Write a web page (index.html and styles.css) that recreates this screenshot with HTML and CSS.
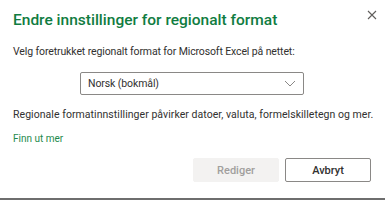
FILE: index.html
```html
<!DOCTYPE html>
<html lang="nb">
<head>
    <meta charset="UTF-8">
    <title>Endre innstillinger for regionalt format</title>
    <link rel="stylesheet" href="styles.css">
</head>
<body>
    <div class="dialog">
        <div class="dialog-header">
            <h1 class="dialog-title">Endre innstillinger for regionalt format</h1>
            <button class="close-btn" aria-label="Lukk">
                <svg width="10" height="10" viewBox="0 0 10 10">
                    <path d="M1 1 L9 9 M9 1 L1 9" stroke="#605e5c" stroke-width="1.1" fill="none"/>
                </svg>
            </button>
        </div>
        <p class="intro">Velg foretrukket regionalt format for Microsoft Excel på nettet:</p>
        <div class="select-row">
            <div class="select">
                <span>Norsk (bokmål)</span>
                <svg width="12" height="7" viewBox="0 0 12 7">
                    <path d="M1 1 L6 6 L11 1" stroke="#8a8886" stroke-width="1" fill="none"/>
                </svg>
            </div>
        </div>
        <p class="info">Regionale formatinnstillinger påvirker datoer, valuta, formelskilletegn og mer.</p>
        <a class="learn-more" href="#">Finn ut mer</a>
        <div class="actions">
            <button class="btn btn-disabled">Rediger</button>
            <button class="btn btn-secondary">Avbryt</button>
        </div>
    </div>
</body>
</html>
```

FILE: styles.css
```css
body {
    margin: 0;
    background-color: #fff;
    font-family: Roboto, "Noto Sans", sans-serif;
    color: #323130;
}

.dialog {
    height: 200px;
    box-sizing: border-box;
    padding: 8px 14px 0 13px;
    border-bottom: 2px solid #6e6e6e;
}

.dialog-header {
    display: flex;
    justify-content: space-between;
    align-items: flex-start;
}

.dialog-title {
    margin: 0;
    font-size: 15.5px;
    font-weight: 500;
    line-height: 24px;
    color: #107c41;
}

.close-btn {
    border: none;
    background: none;
    padding: 0;
    margin: 0 -6px 0 0;
    height: 10px;
    cursor: pointer;
}

.intro {
    margin: 12px 0 0;
    font-size: 10.5px;
    letter-spacing: -0.12px;
    line-height: 16px;
}

.select-row {
    display: flex;
    justify-content: center;
    margin-top: 12px;
}

.select {
    width: 224px;
    height: 23px;
    box-sizing: border-box;
    border: 1px solid #8a8886;
    border-radius: 2px;
    display: flex;
    align-items: center;
    justify-content: space-between;
    padding: 0 7px 0 7px;
    font-size: 10.5px;
    letter-spacing: -0.1px;
}

.info {
    margin: 12px 0 0;
    font-size: 10.5px;
    letter-spacing: 0.05px;
    line-height: 16px;
    white-space: nowrap;
}

.learn-more {
    display: block;
    margin-top: 8px;
    font-size: 10px;
    line-height: 16px;
    color: #1e8a4c;
    text-decoration: none;
}

.actions {
    display: flex;
    justify-content: flex-end;
    gap: 6px;
    margin-top: 11px;
}

.btn {
    width: 86px;
    height: 24px;
    border-radius: 2px;
    font-family: inherit;
    font-size: 11px;
    font-weight: 500;
    padding: 0;
}

.btn-disabled {
    border: 1px solid #f3f2f1;
    background-color: #f3f2f1;
    color: #a19f9d;
}

.btn-secondary {
    border: 1px solid #8a8886;
    background-color: #fff;
    color: #323130;
    cursor: pointer;
}
```
